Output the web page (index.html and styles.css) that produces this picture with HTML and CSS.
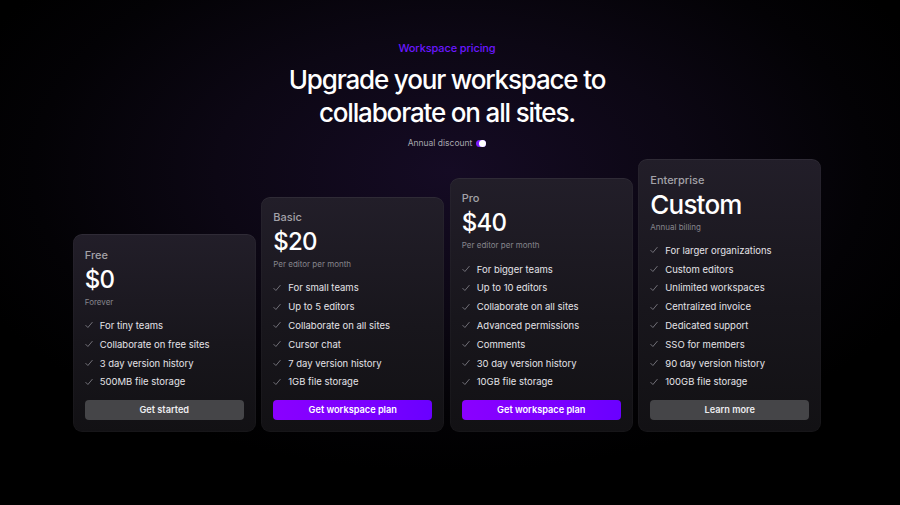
FILE: index.html
```html
<!DOCTYPE html>
<html lang="en">
<head>
<meta charset="utf-8">
<title>Workspace pricing</title>
<link rel="stylesheet" href="styles.css">
</head>
<body>
<main class="page">
  <p class="eyebrow">Workspace pricing</p>
  <h1 class="headline">Upgrade your workspace to<br>collaborate on all sites.</h1>
  <div class="discount">
    <span>Annual discount</span>
    <span class="toggle"><span class="knob"></span></span>
  </div>

  <section class="plans">
    <article class="card">
      <div class="name">Free</div>
      <div class="price">$0</div>
      <div class="sub">Forever</div>
      <ul class="features">
        <li><svg viewBox="0 0 8 8"><path d="M0.8 4.4 L2.9 6.5 L7.2 1.4"/></svg>For tiny teams</li>
        <li><svg viewBox="0 0 8 8"><path d="M0.8 4.4 L2.9 6.5 L7.2 1.4"/></svg>Collaborate on free sites</li>
        <li><svg viewBox="0 0 8 8"><path d="M0.8 4.4 L2.9 6.5 L7.2 1.4"/></svg>3 day version history</li>
        <li><svg viewBox="0 0 8 8"><path d="M0.8 4.4 L2.9 6.5 L7.2 1.4"/></svg>500MB file storage</li>
      </ul>
      <button class="btn btn-gray">Get started</button>
    </article>

    <article class="card">
      <div class="name">Basic</div>
      <div class="price">$20</div>
      <div class="sub">Per editor per month</div>
      <ul class="features">
        <li><svg viewBox="0 0 8 8"><path d="M0.8 4.4 L2.9 6.5 L7.2 1.4"/></svg>For small teams</li>
        <li><svg viewBox="0 0 8 8"><path d="M0.8 4.4 L2.9 6.5 L7.2 1.4"/></svg>Up to 5 editors</li>
        <li><svg viewBox="0 0 8 8"><path d="M0.8 4.4 L2.9 6.5 L7.2 1.4"/></svg>Collaborate on all sites</li>
        <li><svg viewBox="0 0 8 8"><path d="M0.8 4.4 L2.9 6.5 L7.2 1.4"/></svg>Cursor chat</li>
        <li><svg viewBox="0 0 8 8"><path d="M0.8 4.4 L2.9 6.5 L7.2 1.4"/></svg>7 day version history</li>
        <li><svg viewBox="0 0 8 8"><path d="M0.8 4.4 L2.9 6.5 L7.2 1.4"/></svg>1GB file storage</li>
      </ul>
      <button class="btn btn-purple">Get workspace plan</button>
    </article>

    <article class="card">
      <div class="name">Pro</div>
      <div class="price">$40</div>
      <div class="sub">Per editor per month</div>
      <ul class="features">
        <li><svg viewBox="0 0 8 8"><path d="M0.8 4.4 L2.9 6.5 L7.2 1.4"/></svg>For bigger teams</li>
        <li><svg viewBox="0 0 8 8"><path d="M0.8 4.4 L2.9 6.5 L7.2 1.4"/></svg>Up to 10 editors</li>
        <li><svg viewBox="0 0 8 8"><path d="M0.8 4.4 L2.9 6.5 L7.2 1.4"/></svg>Collaborate on all sites</li>
        <li><svg viewBox="0 0 8 8"><path d="M0.8 4.4 L2.9 6.5 L7.2 1.4"/></svg>Advanced permissions</li>
        <li><svg viewBox="0 0 8 8"><path d="M0.8 4.4 L2.9 6.5 L7.2 1.4"/></svg>Comments</li>
        <li><svg viewBox="0 0 8 8"><path d="M0.8 4.4 L2.9 6.5 L7.2 1.4"/></svg>30 day version history</li>
        <li><svg viewBox="0 0 8 8"><path d="M0.8 4.4 L2.9 6.5 L7.2 1.4"/></svg>10GB file storage</li>
      </ul>
      <button class="btn btn-purple">Get workspace plan</button>
    </article>

    <article class="card">
      <div class="name">Enterprise</div>
      <div class="price price-custom">Custom</div>
      <div class="sub">Annual billing</div>
      <ul class="features">
        <li><svg viewBox="0 0 8 8"><path d="M0.8 4.4 L2.9 6.5 L7.2 1.4"/></svg>For larger organizations</li>
        <li><svg viewBox="0 0 8 8"><path d="M0.8 4.4 L2.9 6.5 L7.2 1.4"/></svg>Custom editors</li>
        <li><svg viewBox="0 0 8 8"><path d="M0.8 4.4 L2.9 6.5 L7.2 1.4"/></svg>Unlimited workspaces</li>
        <li><svg viewBox="0 0 8 8"><path d="M0.8 4.4 L2.9 6.5 L7.2 1.4"/></svg>Centralized invoice</li>
        <li><svg viewBox="0 0 8 8"><path d="M0.8 4.4 L2.9 6.5 L7.2 1.4"/></svg>Dedicated support</li>
        <li><svg viewBox="0 0 8 8"><path d="M0.8 4.4 L2.9 6.5 L7.2 1.4"/></svg>SSO for members</li>
        <li><svg viewBox="0 0 8 8"><path d="M0.8 4.4 L2.9 6.5 L7.2 1.4"/></svg>90 day version history</li>
        <li><svg viewBox="0 0 8 8"><path d="M0.8 4.4 L2.9 6.5 L7.2 1.4"/></svg>100GB file storage</li>
      </ul>
      <button class="btn btn-gray">Learn more</button>
    </article>
  </section>
</main>
</body>
</html>
```

FILE: styles.css
```css
html, body {
  margin: 0;
  padding: 0;
  height: 100%;
}

body {
  background-color: #000;
  background-image: radial-gradient(ellipse 520px 300px at 50% 34%, #150b24 0%, #0c0714 45%, #030205 80%, #000 100%);
  font-family: Inter, "Noto Sans", sans-serif;
  color: #fff;
  overflow: hidden;
}

.page {
  display: flex;
  flex-direction: column;
  align-items: center;
  padding: 40px 6px 0 0;
}

.eyebrow {
  margin: 0;
  font-size: 11px;
  line-height: 16px;
  font-weight: 500;
  color: #6a17ff;
  letter-spacing: -0.01em;
}

.headline {
  margin: 7px 0 0;
  font-size: 26px;
  line-height: 33px;
  font-weight: 500;
  text-align: center;
  letter-spacing: -0.045em;
  color: #fff;
}

.discount {
  display: flex;
  align-items: center;
  gap: 4px;
  margin-top: 7px;
  height: 14px;
  font-size: 8.5px;
  color: #a6a6ad;
}

.toggle {
  position: relative;
  display: inline-block;
  width: 10px;
  height: 7px;
  border-radius: 4px;
  background: #7a1dff;
}

.knob {
  position: absolute;
  right: 0;
  top: 0;
  width: 7px;
  height: 7px;
  border-radius: 50%;
  background: #fff;
}

.plans {
  display: flex;
  align-items: flex-end;
  gap: 5.5px;
  margin-top: 9px;
}

.card {
  width: 183px;
  box-sizing: border-box;
  padding: 12.5px 12px 12px;
  border-radius: 9px;
  background: linear-gradient(180deg, #221e29 0%, #18161c 55%, #121114 100%);
  box-shadow: inset 0 1px 0 rgba(255, 255, 255, 0.04), inset 0 0 0 1px rgba(255, 255, 255, 0.025);
  display: flex;
  flex-direction: column;
}

.name {
  font-size: 11px;
  line-height: 16px;
  color: #a3a2a8;
  font-weight: 500;
}

.price {
  margin-top: 2px;
  font-size: 24px;
  line-height: 30px;
  font-weight: 500;
  letter-spacing: -0.03em;
  color: #fff;
}

.price-custom {
  font-size: 26px;
}

.sub {
  margin-top: 1px;
  font-size: 8px;
  line-height: 12px;
  color: #86858c;
}

.features {
  list-style: none;
  margin: 8.4px 0 0;
  padding: 0;
}

.features li {
  display: flex;
  align-items: center;
  gap: 7px;
  height: 18.8px;
  font-size: 9.5px;
  color: #e4e3e8;
  white-space: nowrap;
}

.features svg {
  width: 8px;
  height: 8px;
  flex: none;
  fill: none;
  stroke: #7d7c83;
  stroke-width: 0.9;
  stroke-linecap: round;
  stroke-linejoin: round;
}

.btn {
  margin-top: 8.4px;
  height: 20px;
  border: 0;
  border-radius: 4px;
  font-family: Inter, "Noto Sans", sans-serif;
  font-size: 9.2px;
  font-weight: 600;
  color: #fff;
  padding: 0;
}

.btn-gray {
  background: #454548;
  color: #ececee;
}

.btn-purple {
  background: linear-gradient(90deg, #8a00ff 0%, #7a00ff 60%, #6a00ff 100%);
}
```
